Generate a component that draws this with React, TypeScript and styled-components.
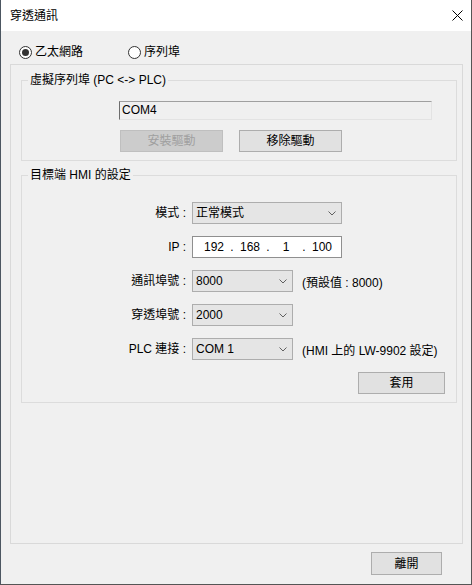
import { Fragment } from "react";
import styled, { createGlobalStyle } from "styled-components";

const GlobalStyle = createGlobalStyle`
  html, body {
    margin: 0;
    padding: 0;
    background: #f0f0f0;
  }
  body {
    font-family: "Liberation Sans", "Noto Sans CJK TC", sans-serif;
    font-size: 12px;
    color: #000;
  }
  * {
    box-sizing: border-box;
  }
`;

const Window = styled.div`
  width: 472px;
  height: 585px;
  display: flex;
  flex-direction: column;
  background: #f0f0f0;
  border: 1px solid #555;
  border-top: none;
  border-left-color: #4c5661;
`;

const TitleBar = styled.div`
  height: 31px;
  flex: none;
  display: flex;
  align-items: center;
  justify-content: space-between;
  background: #fff;
  padding-left: 9px;
  line-height: 16px;
`;

const CloseBox = styled.div`
  width: 28px;
  height: 31px;
  display: flex;
  align-items: center;
  justify-content: center;
`;

const Body = styled.div`
  flex: 1;
  display: flex;
  flex-direction: column;
  padding: 13px 8px 0 9px;
`;

const RadioRow = styled.div`
  height: 16px;
  display: flex;
  align-items: center;
  padding-left: 9px;
`;

const RadioOption = styled.label<{ $w?: number }>`
  display: flex;
  align-items: center;
  gap: 3px;
  width: ${({ $w }) => ($w ? `${$w}px` : "auto")};
  line-height: 16px;
`;

const RadioCircle = styled.span<{ $on?: boolean }>`
  width: 13px;
  height: 13px;
  border-radius: 50%;
  border: 1px solid #333;
  background: #fff;
  display: flex;
  align-items: center;
  justify-content: center;

  &::after {
    content: "";
    width: 7px;
    height: 7px;
    border-radius: 50%;
    background: #333;
    display: ${({ $on }) => ($on ? "block" : "none")};
  }
`;

const Panel = styled.div`
  height: 480px;
  margin-top: 4px;
  border: 1px solid #d9d9d9;
  padding: 7px 5px 0 10px;
  display: flex;
  flex-direction: column;
`;

const Group = styled.fieldset<{ $pt: number }>`
  margin: 0;
  border: 1px solid #dcdcdc;
  padding: ${({ $pt }) => $pt}px 0 8px 0;
  min-inline-size: 0;

  & + & {
    margin-top: 6px;
  }
`;

const Legend = styled.legend`
  margin-left: 6px;
  padding: 0 2px;
  line-height: 16px;
`;

const DriverBlock = styled.div`
  padding-left: 97px;
  display: flex;
  flex-direction: column;
  gap: 10px;
`;

const ReadOnlyField = styled.div`
  width: 313px;
  height: 19px;
  line-height: 17px;
  padding-left: 2px;
  background: #f0f0f0;
  border-top: 1px solid #a0a0a0;
  border-left: 1px solid #6d6d6d;
  border-right: 1px solid #e3e3e3;
  border-bottom: 1px solid #e3e3e3;
`;

const ButtonRow = styled.div`
  display: flex;
  gap: 16px;
  padding-left: 1px;
`;

const Button = styled.button<{ $w: number; $h?: number }>`
  width: ${({ $w }) => $w}px;
  height: ${({ $h }) => $h ?? 22}px;
  padding: 0;
  font: inherit;
  line-height: 16px;
  color: #000;
  background: #e1e1e1;
  border: 1px solid #adadad;
  border-radius: 0;

  &:disabled {
    color: #a0a0a0;
    background: #cccccc;
    border-color: #bfbfbf;
  }
`;

const SettingsGrid = styled.div`
  display: grid;
  grid-template-columns: 164px 1fr;
  column-gap: 6px;
  row-gap: 12px;
  grid-auto-rows: 22px;
`;

const Label = styled.div`
  text-align: right;
  line-height: 22px;
`;

const FieldCell = styled.div`
  display: flex;
  align-items: center;
  gap: 9px;
`;

const Combo = styled.div<{ $w: number }>`
  width: ${({ $w }) => $w}px;
  height: 22px;
  display: flex;
  align-items: center;
  justify-content: space-between;
  padding: 0 5px 0 3px;
  background: #e5e5e5;
  border: 1px solid #adadad;
  line-height: 16px;
`;

const IpBox = styled.div`
  width: 150px;
  height: 22px;
  display: flex;
  align-items: center;
  padding-left: 7px;
  background: #fff;
  border: 1px solid #8f8f8f;
  line-height: 16px;
`;

const IpPart = styled.span`
  width: 28px;
  text-align: center;
`;

const IpDot = styled.span`
  width: 8px;
  text-align: center;
`;

const ApplyRow = styled.div`
  grid-column: 1 / -1;
  display: flex;
  justify-content: flex-end;
  padding-right: 11px;
`;

const Footer = styled.div`
  display: flex;
  justify-content: flex-end;
  padding: 8px 21px 0 0;
`;

const Chevron = () => (
  <svg width="8" height="5" viewBox="0 0 8 5">
    <path d="M0.5 0.5 L4 4 L7.5 0.5" fill="none" stroke="#606060" strokeWidth="1" />
  </svg>
);

const CloseIcon = () => (
  <svg width="11" height="11" viewBox="0 0 11 11">
    <path d="M0.5 0.5 L10.5 10.5 M10.5 0.5 L0.5 10.5" stroke="#000" strokeWidth="1" />
  </svg>
);

const settings = [
  { label: "通訊埠號 :", value: "8000", note: "(預設值 : 8000)" },
  { label: "穿透埠號 :", value: "2000" },
  { label: "PLC 連接 :", value: "COM 1", note: "(HMI 上的 LW-9902 設定)" },
];

const ip = ["192", "168", "1", "100"];

export default function App() {
  return (
    <>
      <GlobalStyle />
      <Window>
        <TitleBar>
          <span>穿透通訊</span>
          <CloseBox>
            <CloseIcon />
          </CloseBox>
        </TitleBar>
        <Body>
          <RadioRow>
            <RadioOption $w={109}>
              <RadioCircle $on />
              乙太網路
            </RadioOption>
            <RadioOption>
              <RadioCircle />
              序列埠
            </RadioOption>
          </RadioRow>

          <Panel>
            <Group $pt={13}>
              <Legend>虛擬序列埠 (PC &lt;-&gt; PLC)</Legend>
              <DriverBlock>
                <ReadOnlyField>COM4</ReadOnlyField>
                <ButtonRow>
                  <Button $w={103} disabled>
                    安裝驅動
                  </Button>
                  <Button $w={103}>移除驅動</Button>
                </ButtonRow>
              </DriverBlock>
            </Group>

            <Group $pt={19}>
              <Legend>目標端 HMI 的設定</Legend>
              <SettingsGrid>
                <Label>模式 :</Label>
                <FieldCell>
                  <Combo $w={150}>
                    <span>正常模式</span>
                    <Chevron />
                  </Combo>
                </FieldCell>

                <Label>IP :</Label>
                <FieldCell>
                  <IpBox>
                    {ip.map((part, i) => (
                      <Fragment key={i}>
                        <IpPart>{part}</IpPart>
                        {i < ip.length - 1 && <IpDot>.</IpDot>}
                      </Fragment>
                    ))}
                  </IpBox>
                </FieldCell>

                {settings.map((s) => (
                  <Fragment key={s.label}>
                    <Label>{s.label}</Label>
                    <FieldCell>
                      <Combo $w={101}>
                        <span>{s.value}</span>
                        <Chevron />
                      </Combo>
                      {s.note && <span>{s.note}</span>}
                    </FieldCell>
                  </Fragment>
                ))}

                <ApplyRow>
                  <Button $w={87}>套用</Button>
                </ApplyRow>
              </SettingsGrid>
            </Group>
          </Panel>

          <Footer>
            <Button $w={71} $h={23}>
              離開
            </Button>
          </Footer>
        </Body>
      </Window>
    </>
  );
}
